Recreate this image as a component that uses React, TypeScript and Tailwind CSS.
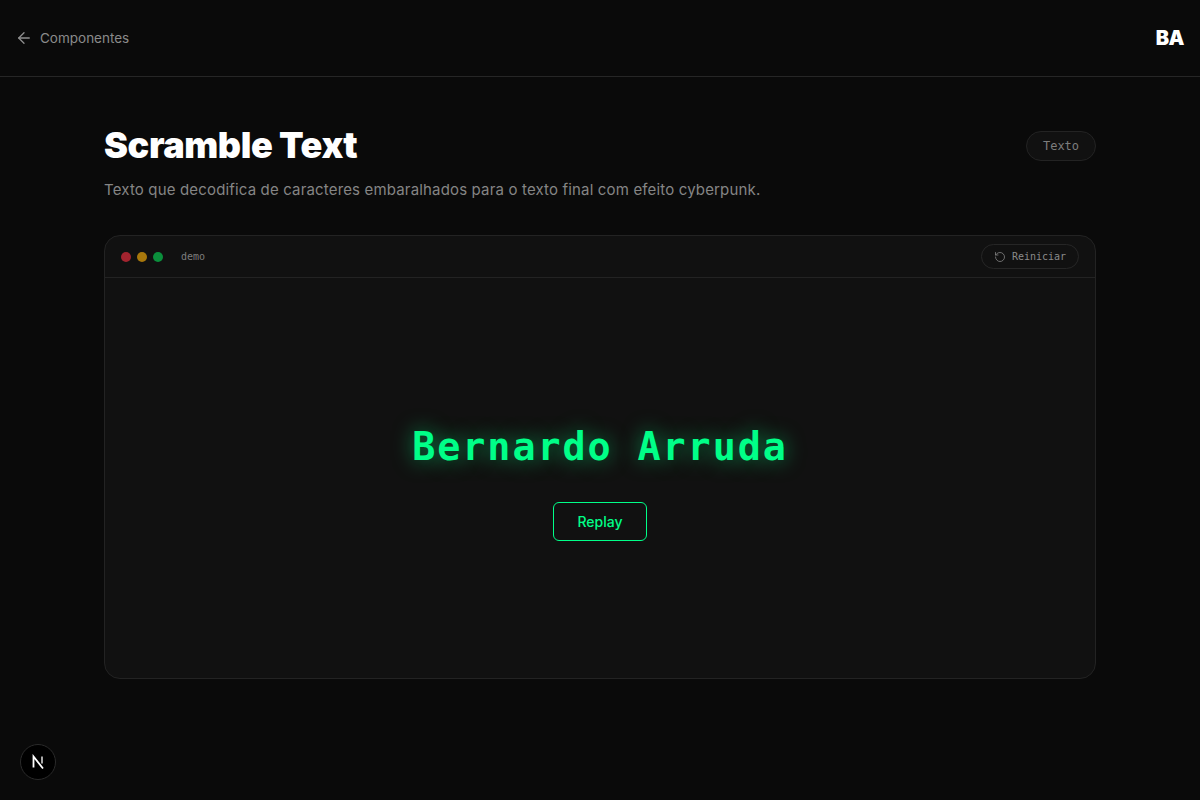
import { ArrowLeft, RotateCcw } from "lucide-react";

const sans = "font-['Inter',sans-serif]";
const mono = "font-['DejaVu_Sans_Mono',monospace]";

function Header() {
  return (
    <header className="flex h-[77px] items-center justify-between border-b border-[#262626] pl-[15px] pr-[16px]">
      <div className="flex items-center gap-[7px] text-[#8a8a8a]">
        <ArrowLeft className="h-[18px] w-[18px] text-[#8f8f8f]" strokeWidth={1.75} />
        <span className={`${sans} text-[13.5px]`}>Componentes</span>
      </div>
      <span className={`${sans} text-[20px] font-black tracking-tight text-white`}>BA</span>
    </header>
  );
}

function DemoCard() {
  return (
    <div className="mt-[33px] h-[444px] rounded-[16px] border border-[#232323] bg-[#111111]">
      <div className="flex h-[42px] items-center justify-between border-b border-[#232323] pl-4 pr-4">
        <div className="flex items-center">
          <div className="flex items-center gap-[6px]">
            <span className="h-[10px] w-[10px] rounded-full bg-[#a3242f]" />
            <span className="h-[10px] w-[10px] rounded-full bg-[#a8780c]" />
            <span className="h-[10px] w-[10px] rounded-full bg-[#0b8f3c]" />
          </div>
          <span className={`${mono} ml-[18px] text-[10px] text-[#7d7d7d]`}>demo</span>
        </div>
        <button className="flex h-[25px] w-[98px] items-center justify-center gap-[6px] rounded-full border border-[#262626] text-[#8a8a8a]">
          <RotateCcw className="h-3 w-3" strokeWidth={1.5} />
          <span className={`${mono} text-[10px]`}>Reiniciar</span>
        </button>
      </div>
      <div className="flex h-[400px] flex-col items-center pt-[145px]">
        <div className={`${mono} text-[38.4px] leading-[48px] font-bold tracking-[1.92px] text-[#00ff88] [text-shadow:0_0_20px_rgba(0,255,136,0.5)]`}>
          Bernardo Arruda
        </div>
        <button className={`${sans} mt-[31px] h-[39px] w-[94px] rounded-[6px] border border-[#00ff88] text-[14px] font-medium text-[#00ff88]`}>
          Replay
        </button>
      </div>
    </div>
  );
}

export default function App() {
  return (
    <div className="relative h-[800px] overflow-hidden bg-[#0a0a0a]">
      <Header />
      <main className="mx-auto w-[992px] pt-[45px]">
        <div className="flex items-start justify-between">
          <div>
            <h1 className={`${sans} text-[36px] leading-[46px] font-black tracking-[-0.4px] text-white`}>Scramble Text</h1>
            <p className={`${sans} mt-[10px] text-[15px] leading-[24px] tracking-[0.16px] text-[#858585]`}>
              Texto que decodifica de caracteres embaralhados para o texto final com efeito cyberpunk.
            </p>
          </div>
          <span className={`${mono} mt-[9px] flex h-[30px] w-[70px] items-center justify-center rounded-full border border-[#232323] bg-[#111111] text-[12px] text-[#7d7d7d]`}>
            Texto
          </span>
        </div>
        <DemoCard />
      </main>
      <div className="absolute bottom-[20px] left-[20px] flex h-[36px] w-[36px] items-center justify-center rounded-full border border-[#2a2a2a] bg-black">
        <svg viewBox="0 0 16 16" className="h-[16px] w-[16px]" fill="none">
          <path d="M3.5 13.5V2.5L13 14.5" stroke="#ffffff" strokeWidth="1.8" />
          <path d="M12 2.5V9.5" stroke="#bbbbbb" strokeWidth="1.8" />
        </svg>
      </div>
    </div>
  );
}
